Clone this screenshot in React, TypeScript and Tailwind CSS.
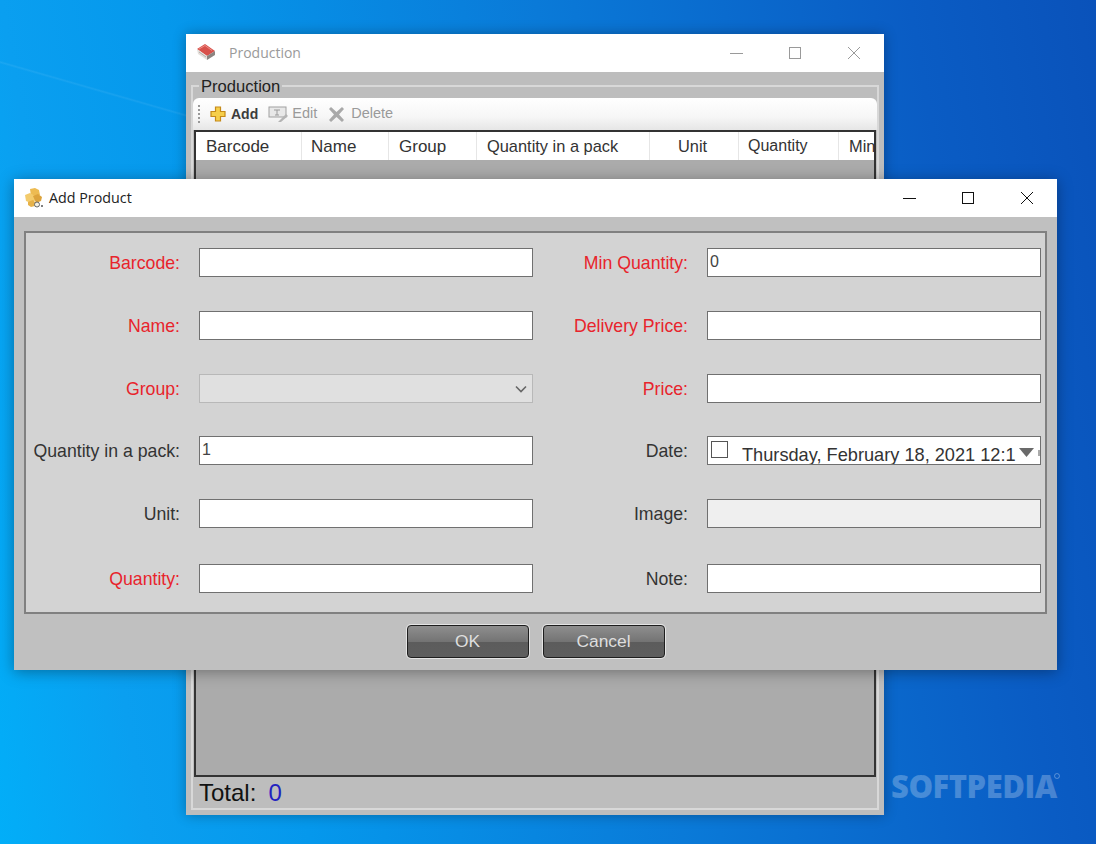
import React from "react";

const arial = "font-['Liberation_Sans',Arial,sans-serif]";
const red = "text-[#e8242c]";

function MinMaxClose({ color, stroke }: { color: string; stroke: number }) {
  return (
    <div className="flex items-center h-full">
      <svg width="59" height="38" viewBox="0 0 59 38"><path d="M23 19.5H36" stroke={color} strokeWidth={stroke} /></svg>
      <svg width="59" height="38" viewBox="0 0 59 38"><rect x="23.5" y="13.5" width="11" height="11" fill="none" stroke={color} strokeWidth={stroke} /></svg>
      <svg width="59" height="38" viewBox="0 0 59 38"><path d="M23 13L35 25M35 13L23 25" stroke={color} strokeWidth={stroke} /></svg>
    </div>
  );
}

function BookIcon() {
  return (
    <svg width="20" height="18" viewBox="0 0 20 18">
      <path d="M1 6L9 1L19 8L11 13Z" fill="#d8504a" />
      <path d="M1 6L11 13V17L2 11Z" fill="#e4dfdb" />
      <path d="M11 13L19 8V12L11 17Z" fill="#8c8480" />
      <path d="M3 6L9 2.5L16 7.5" stroke="#ee9088" fill="none" />
      <path d="M3 9L10 14" stroke="#b5aeaa" fill="none" />
    </svg>
  );
}

function BoxesIcon() {
  return (
    <svg width="20" height="20" viewBox="0 0 20 20">
      <path d="M6 1L11 0L15 2L16 7L12 9L7 8Z" fill="#edbb52" />
      <path d="M1 7L6 5L11 8L12 12L7 15L2 13Z" fill="#f3cb6c" />
      <path d="M9 8L14 6L18 9L17 13L12 15Z" fill="#dca33c" />
      <path d="M4 14L9 12L12 15L11 18L7 19L4 17Z" fill="#e6b24a" />
      <circle cx="13" cy="16.5" r="2.5" fill="#f4f0e0" stroke="#666" strokeWidth="1" />
      <circle cx="18" cy="18" r="1" fill="#555" />
    </svg>
  );
}

function PlusIcon() {
  return (
    <svg width="16" height="16" viewBox="0 0 16 16">
      <path d="M5.5 1H10.5V5.5H15V10.5H10.5V15H5.5V10.5H1V5.5H5.5Z" fill="#f6cf4a" stroke="#c58a1a" strokeWidth="1.2" />
    </svg>
  );
}

function EditIcon() {
  return (
    <svg width="20" height="18" viewBox="0 0 20 18">
      <rect x="1" y="2" width="17" height="10" fill="#e8e8e8" stroke="#a0a0a0" />
      <path d="M6 5H12M9 5V10M7 10H11" stroke="#9a9a9a" fill="none" />
      <path d="M10 17L18 9L20 11L13 17Z" fill="#b4b4b4" />
    </svg>
  );
}

function CrossIcon() {
  return (
    <svg width="17" height="17" viewBox="0 0 17 17">
      <path d="M1 3L3 1L8.5 6L14 1L16 3L11 8.5L16 14L14 16L8.5 11L3 16L1 14L6 8.5Z" fill="#a9a9a9" />
    </svg>
  );
}

const headers: { t: string; w: string; pl: string; size: string }[] = [
  { t: "Barcode", w: "w-[106px]", pl: "pl-[10px] pt-[2px]", size: "text-[17px]" },
  { t: "Name", w: "w-[87px]", pl: "pl-[9px] pt-[2px]", size: "text-[17px]" },
  { t: "Group", w: "w-[88px]", pl: "pl-[10px] pt-[2px]", size: "text-[17px]" },
  { t: "Quantity in a pack", w: "w-[173px]", pl: "pl-[10px]", size: "text-[16.4px]" },
  { t: "Unit", w: "w-[89px]", pl: "pl-[28px]", size: "text-[16.4px]" },
  { t: "Quantity", w: "w-[100px]", pl: "pl-[9px]", size: "text-[16px]" },
  { t: "Min", w: "w-[38px]", pl: "pl-[10px]", size: "text-[16.4px]" },
];

function Production() {
  return (
    <div className="absolute left-[186px] top-[34px] w-[698px] h-[781px] bg-[#bdbdbd] flex flex-col shadow-[0_0_12px_rgba(0,0,0,0.3)]">
      <div className="h-[38px] bg-white flex items-center justify-between shrink-0">
        <div className="flex items-center pl-[10px] gap-[13px] pb-[2px]">
          <BookIcon />
          <span className="font-['Open_Sans',sans-serif] text-[14px] text-[#9a9a9a]">Production</span>
        </div>
        <MinMaxClose color="#9a9a9a" stroke={1} />
      </div>
      <div className="relative flex-1 mx-[5px] mt-[13px] mb-[5px] border-2 border-[#d8d8d8] flex flex-col pt-[11px]">
        <span className={`absolute left-[6px] top-[-9px] bg-[#bdbdbd] px-[2px] leading-[18px] text-[16.6px] text-[#222] ${arial}`}>Production</span>
        <div className={`h-[32px] rounded-t-[6px] bg-[linear-gradient(#ffffff,#f6f6f6_60%,#e6e6e6)] flex items-center pl-[5px] text-[14px] shrink-0 ${arial}`}>
          <div className="w-[3px] h-[18px] mr-[9px] border-l-[2px] border-dotted border-[#999]" />
          <PlusIcon />
          <span className="ml-[5px] font-bold text-[#3c3c3c]">Add</span>
          <span className="ml-[10px]"><EditIcon /></span>
          <span className="ml-[4px] text-[14.5px] text-[#9a9a9a]">Edit</span>
          <span className="ml-[11px]"><CrossIcon /></span>
          <span className="ml-[6px] text-[14.5px] text-[#9a9a9a]">Delete</span>
        </div>
        <div className="h-[647px] mx-[1px] border-2 border-[#333] bg-[#ababab] shrink-0 overflow-hidden">
          <div className={`h-[28px] flex bg-white text-[#333] ${arial}`}>
            {headers.map((h) => (
              <div key={h.t} className={`${h.w} ${h.pl} ${h.size} shrink-0 flex items-center border-r border-[#e6e6e6] whitespace-nowrap`}>
                {h.t}
              </div>
            ))}
          </div>
        </div>
        <div className={`pl-[6px] pt-[2px] text-[24px] leading-[28px] text-[#111] ${arial}`}>
          Total:<span className="ml-[12px] text-[#2222c0]">0</span>
        </div>
      </div>
    </div>
  );
}

function Box({ className = "", children }: { className?: string; children?: React.ReactNode }) {
  return (
    <div className={`w-[334px] h-[29px] border border-[#707070] flex items-center pl-[2px] text-[16px] text-[#444] ${arial} ${className}`}>
      {children}
    </div>
  );
}

type Row = { label: string; isRed: boolean; field: React.ReactNode };

const white = "bg-white";

const rowHeights = ["h-[63px]", "h-[63px]", "h-[62px]", "h-[63px]", "h-[65px]", "h-[29px]"];

const leftRows: Row[] = [
  { label: "Barcode:", isRed: true, field: <Box className={white} /> },
  { label: "Name:", isRed: true, field: <Box className={white} /> },
  {
    label: "Group:",
    isRed: true,
    field: (
      <Box className="bg-[#e0e0e0] !border-[#b8b8b8] justify-end pr-[5px]">
        <svg width="12" height="8" viewBox="0 0 12 8"><path d="M1 1.5L6 6.5L11 1.5" fill="none" stroke="#666" strokeWidth="1.6" /></svg>
      </Box>
    ),
  },
  { label: "Quantity in a pack:", isRed: false, field: <Box className={`${white} pb-[2px]`}>1</Box> },
  { label: "Unit:", isRed: false, field: <Box className={white} /> },
  { label: "Quantity:", isRed: true, field: <Box className={white} /> },
];

const rightRows: Row[] = [
  { label: "Min Quantity:", isRed: true, field: <Box className={`${white} pb-[2px]`}>0</Box> },
  { label: "Delivery Price:", isRed: true, field: <Box className={white} /> },
  { label: "Price:", isRed: true, field: <Box className={white} /> },
  {
    label: "Date:",
    isRed: false,
    field: (
      <Box className={`${white} !pl-[3px] overflow-hidden whitespace-nowrap`}>
        <span className="w-[17px] h-[17px] border border-[#555] shrink-0 mb-[2px]" />
        <span className="ml-[14px] mt-[10px] text-[18.2px] text-[#333]">Thursday, February 18, 2021 12:1</span>
        <svg className="ml-[3px] mt-[4px] shrink-0" width="15" height="9" viewBox="0 0 15 9"><path d="M0 0H15L7.5 9Z" fill="#6a6a6a" /></svg>
        <span className="ml-[4px] mt-[4px] w-[2px] h-[6px] bg-[#aaa] shrink-0" />
      </Box>
    ),
  },
  { label: "Image:", isRed: false, field: <Box className="bg-[#efefef]" /> },
  { label: "Note:", isRed: false, field: <Box className={white} /> },
];

function FormColumn({ rows, labelW }: { rows: Row[]; labelW: string }) {
  return (
    <div className="flex flex-col">
      {rows.map((r, i) => (
        <div key={r.label} className={`${rowHeights[i]} flex items-start`}>
          <div className={`${labelW} h-[29px] pt-[1px] flex items-center justify-end whitespace-nowrap text-[17.7px] ${arial} ${r.isRed ? red : "text-[#333]"}`}>
            {r.label}
          </div>
          <div className="ml-[19px]">{r.field}</div>
        </div>
      ))}
    </div>
  );
}

function Btn({ children }: { children: React.ReactNode }) {
  return (
    <button className={`w-[122px] h-[33px] rounded-[4px] border border-[#1e1e1e] shadow-[0_0_0_1px_#e4e4e4] bg-[linear-gradient(#8e8e8e,#747474_50%,#5c5c5c_52%,#5e5e5e)] text-[#dedede] text-[17.4px] ${arial}`}>
      {children}
    </button>
  );
}

function AddProduct() {
  return (
    <div className="absolute left-[14px] top-[179px] w-[1043px] h-[491px] bg-[#c0c0c0] flex flex-col shadow-[0_2px_14px_rgba(0,0,0,0.35)]">
      <div className="h-[38px] bg-white flex items-center justify-between shrink-0">
        <div className="flex items-center pl-[10px] gap-[5px]">
          <BoxesIcon />
          <span className="font-['Open_Sans',sans-serif] text-[14.3px] text-[#222]">Add Product</span>
        </div>
        <MinMaxClose color="#111" stroke={1} />
      </div>
      <div className="mx-[10px] mt-[14px] h-[383px] border-2 border-[#808080] bg-[#d3d3d3] flex pt-[15px]">
        <FormColumn rows={leftRows} labelW="w-[154px]" />
        <FormColumn rows={rightRows} labelW="w-[155px]" />
      </div>
      <div className="flex justify-center gap-[14px] mt-[11px]">
        <Btn>OK</Btn>
        <Btn>Cancel</Btn>
      </div>
    </div>
  );
}

export default function App() {
  return (
    <div className="relative w-[1096px] h-[844px] overflow-hidden bg-[linear-gradient(80deg,#02aef8_0%,#0a9ff0_12%,#0598ec_25%,#0a7ad8_55%,#0a5cc4_85%,#0a52ba_100%)]">
      <div className="absolute left-0 top-0 w-[190px] h-[180px] bg-[linear-gradient(16deg,transparent_49.5%,rgba(255,255,255,0.07)_50.3%,transparent_51%)]" />
      <Production />
      <AddProduct />
      <div className="absolute left-[891px] top-[767px] font-['Open_Sans',sans-serif] font-extrabold text-[31px] leading-[38px] tracking-[-0.5px] text-white/25">
        SOFTPEDIA
      </div>
      <div className="absolute left-[1054px] top-[773px] w-[6px] h-[6px] rounded-full border border-white/30" />
    </div>
  );
}
